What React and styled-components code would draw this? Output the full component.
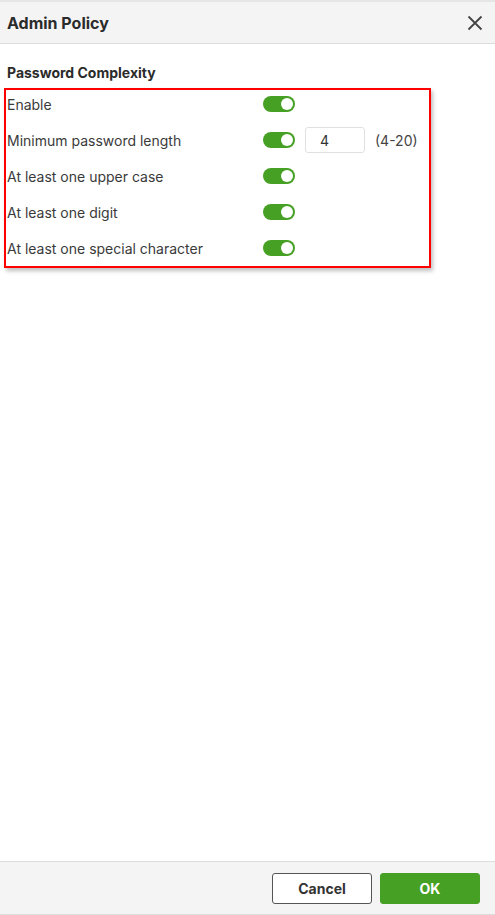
import styled, { createGlobalStyle } from 'styled-components';

const GlobalStyle = createGlobalStyle`
    html, body {
        margin: 0;
        padding: 0;
        background: #fff;
    }
    body {
        font-family: Inter, "Noto Sans", Arial, sans-serif;
        color: #333;
    }
`;

const rules = [
    { label: 'Enable' },
    { label: 'Minimum password length', length: '4', range: '(4-20)' },
    { label: 'At least one upper case' },
    { label: 'At least one digit' },
    { label: 'At least one special character' },
];

const App = () => {
    return (
        <>
            <GlobalStyle />
            <Dialog>
                <Header>
                    <Title>Admin Policy</Title>
                    <CloseButton aria-label="Close">
                        <svg width="16" height="16" viewBox="0 0 16 16">
                            <path d="M1.5 1.5 L14.5 14.5 M14.5 1.5 L1.5 14.5" stroke="#444" strokeWidth="1.8" />
                        </svg>
                    </CloseButton>
                </Header>
                <Body>
                    <SectionTitle>Password Complexity</SectionTitle>
                    <Section>
                        {rules.map((rule) => (
                            <Row key={rule.label}>
                                <Label>{rule.label}</Label>
                                <Toggle $on />
                                {rule.length && (
                                    <>
                                        <NumberInput defaultValue={rule.length} />
                                        <Hint>{rule.range}</Hint>
                                    </>
                                )}
                            </Row>
                        ))}
                        <Highlight />
                    </Section>
                </Body>
                <Footer>
                    <Button>Cancel</Button>
                    <Button $primary>OK</Button>
                </Footer>
            </Dialog>
        </>
    );
};

const Dialog = styled.div`
    height: 915px;
    display: flex;
    flex-direction: column;
    box-sizing: border-box;
    border-top: 2px solid #e6e6e6;
`;

const Header = styled.div`
    height: 41px;
    background: #f4f4f4;
    border-bottom: 1px solid #dcdcdc;
    display: flex;
    align-items: center;
    justify-content: space-between;
    padding: 0 12px 0 7px;
`;

const Title = styled.h1`
    margin: 0;
    font-size: 16px;
    font-weight: 700;
    color: #2b2b2b;
`;

const CloseButton = styled.button`
    border: none;
    background: none;
    padding: 0;
    width: 16px;
    height: 16px;
    display: flex;
    cursor: pointer;
`;

const Body = styled.div`
    flex: 1;
    padding: 21px 0 0 7px;
`;

const SectionTitle = styled.div`
    font-size: 14px;
    font-weight: 700;
    color: #2b2b2b;
    line-height: 16px;
    margin-bottom: 5px;
`;

const Section = styled.div`
    position: relative;
`;

const Row = styled.div`
    height: 36px;
    display: flex;
    align-items: center;
`;

const Label = styled.div`
    width: 256px;
    font-size: 14px;
    color: #3a3a3a;
`;

const Toggle = styled.span`
    width: 32px;
    height: 16px;
    border-radius: 8px;
    background: ${(p) => (p.$on ? '#46a024' : '#ccc')};
    position: relative;
    flex-shrink: 0;

    &::after {
        content: '';
        position: absolute;
        top: 2px;
        left: ${(p) => (p.$on ? '18px' : '2px')};
        width: 12px;
        height: 12px;
        border-radius: 50%;
        background: #fff;
    }
`;

const NumberInput = styled.input`
    margin-left: 10px;
    width: 60px;
    height: 26px;
    box-sizing: border-box;
    border: 1px solid #e0e0e0;
    border-radius: 3px;
    padding: 0 14px;
    font-family: inherit;
    font-size: 14px;
    color: #333;
    outline: none;
`;

const Hint = styled.span`
    margin-left: 10px;
    font-size: 14px;
    color: #444;
`;

const Highlight = styled.div`
    position: absolute;
    left: -3px;
    top: 2px;
    width: 427px;
    height: 180px;
    box-sizing: border-box;
    border: 2px solid #ff0000;
    box-shadow: 2px 3px 4px rgba(0, 0, 0, 0.25);
    pointer-events: none;
`;

const Footer = styled.div`
    height: 52px;
    box-sizing: content-box;
    background: #f4f4f4;
    border-top: 1px solid #dcdcdc;
    border-bottom: 1px solid #dcdcdc;
    display: flex;
    align-items: center;
    justify-content: flex-end;
    gap: 8px;
    padding-right: 15px;
`;

const Button = styled.button`
    width: 100px;
    height: 31px;
    border-radius: 3px;
    font-family: inherit;
    font-size: 14px;
    font-weight: 700;
    cursor: pointer;
    border: 1px solid ${(p) => (p.$primary ? '#46a024' : '#555')};
    background: ${(p) => (p.$primary ? '#46a024' : '#fff')};
    color: ${(p) => (p.$primary ? '#fff' : '#333')};
`;

export default App;
